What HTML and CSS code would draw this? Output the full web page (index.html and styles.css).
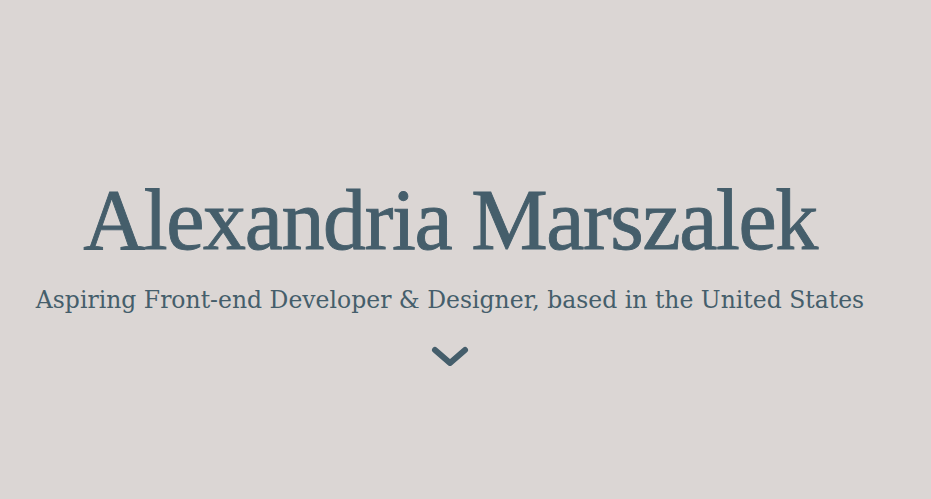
FILE: index.html
```html
<!DOCTYPE html>
<html lang="en">
<head>
<meta charset="utf-8">
<title>Alexandria Marszalek</title>
<link rel="stylesheet" href="styles.css">
</head>
<body>
<header class="hero">
  <h1 class="hero-title">Alexandria Marszalek</h1>
  <p class="hero-subtitle">Aspiring Front-end Developer &amp; Designer, based in the United States</p>
  <a class="hero-arrow" href="#about" aria-label="Scroll down">
    <svg width="40" height="24" viewBox="0 0 40 24" fill="none" stroke="#455e6b" stroke-width="6" stroke-linecap="round" stroke-linejoin="round"><path d="M5 5 L20 18 L35 5"/></svg>
  </a>
</header>
</body>
</html>
```

FILE: styles.css
```css
html, body {
  margin: 0;
  padding: 0;
  background: #dbd6d4;
}
body {
  width: 931px;
  height: 499px;
  overflow: hidden;
}
.hero {
  box-sizing: border-box;
  width: 900px;
  display: flex;
  flex-direction: column;
  align-items: center;
  padding-top: 170px;
  color: #455e6b;
}
.hero-title {
  margin: 0;
  font-family: "Liberation Serif", serif;
  font-weight: 400;
  font-size: 86px;
  letter-spacing: -1.4px;
  -webkit-text-stroke: 0.9px #455e6b;
  line-height: 100px;
  white-space: nowrap;
}
.hero-subtitle {
  margin: 14px 0 0;
  font-family: "DejaVu Serif", serif;
  font-size: 23.5px;
  line-height: 32px;
  white-space: nowrap;
}
.hero-arrow {
  display: block;
  margin-top: 29px;
  line-height: 0;
}
```
